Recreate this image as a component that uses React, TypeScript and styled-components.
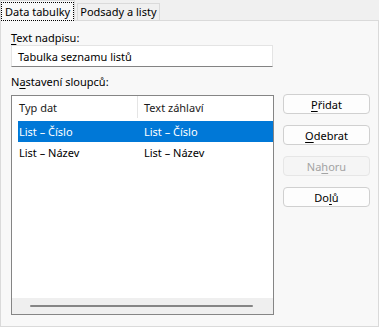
import * as React from 'react';
import styled, { createGlobalStyle } from 'styled-components';

const GlobalStyle = createGlobalStyle`
  html, body {
    margin: 0;
    padding: 0;
    background: #f0f0f0;
  }
  body {
    font-family: 'Noto Sans', 'Open Sans', sans-serif;
    font-size: 11px;
    color: #000;
  }
`;

const Dialog = styled.div`
  width: 379px;
  height: 327px;
  display: flex;
  flex-direction: column;
  background: #f0f0f0;
  box-sizing: border-box;
`;

const TabStrip = styled.div`
  height: 21px;
  display: flex;
  align-items: flex-end;
  margin-bottom: -1px;
  position: relative;
  z-index: 1;
`;

const Tab = styled.div<{ $active?: boolean }>`
  box-sizing: border-box;
  height: ${(p) => (p.$active ? '21px' : '18px')};
  padding: ${(p) => (p.$active ? '2px 1px 0 1px' : '0 2px 0 2px')};
  margin-left: ${(p) => (p.$active ? '0' : '2px')};
  background: ${(p) => (p.$active ? '#f8f8f8' : '#f0f0f0')};
  border: 1px solid #dadada;
  border-bottom: ${(p) => (p.$active ? '1px solid #f8f8f8' : '1px solid #dadada')};
  display: flex;
  align-items: ${(p) => (p.$active ? 'flex-start' : 'center')};
  line-height: 16px;
  white-space: nowrap;
  color: #000;
`;

const FocusRect = styled.span`
  outline: 1px dotted #000;
  padding: 0 3px;
  height: 17px;
  display: flex;
  align-items: center;
`;

const Panel = styled.div`
  flex: 1;
  box-sizing: border-box;
  background: #f8f8f8;
  border: 1px solid #dadada;
  padding: 9px 8px 11px 10px;
  display: grid;
  grid-template-columns: 263px 1fr;
  column-gap: 9px;
`;

const LeftColumn = styled.div`
  display: flex;
  flex-direction: column;
  min-height: 0;
`;

const Label = styled.div<{ $gap?: number }>`
  line-height: 15px;
  height: 15px;
  margin-top: ${(p) => p.$gap ?? 0}px;
  white-space: nowrap;
`;

const Key = styled.span`
  text-decoration: underline;
  text-underline-offset: 2px;
`;

const TextInput = styled.div`
  box-sizing: border-box;
  width: 262px;
  height: 22px;
  background: #fff;
  border: 1px solid #e4e4e4;
  border-bottom: 1px solid #838383;
  padding-left: 6px;
  display: flex;
  align-items: center;
`;

const ListBox = styled.div`
  flex: 1;
  margin-top: 6px;
  box-sizing: border-box;
  border: 1px solid #858585;
  background: #fff;
  display: flex;
  flex-direction: column;
  width: 263px;
`;

const Header = styled.div`
  display: grid;
  grid-template-columns: 125px 1fr;
  height: 22px;
  margin-bottom: 3px;
`;

const HeaderCell = styled.div<{ $divider?: boolean }>`
  display: flex;
  align-items: center;
  padding-left: ${(p) => (p.$divider ? '6px' : '7px')};
  border-left: ${(p) => (p.$divider ? '1px solid #e5e5e5' : 'none')};
  color: #1a1a1a;
`;

const Rows = styled.div`
  flex: 1;
  padding-left: 6px;
`;

const Row = styled.div<{ $selected?: boolean }>`
  display: grid;
  grid-template-columns: 125px 1fr;
  height: 21px;
  align-items: center;
  background: ${(p) => (p.$selected ? '#0078d7' : 'transparent')};
  color: ${(p) => (p.$selected ? '#fff' : '#000')};
`;

const Cell = styled.div`
  padding-left: 1px;
  white-space: nowrap;
`;

const HScroll = styled.div`
  height: 16px;
  background: #efefef;
  display: flex;
  align-items: center;
  padding: 0 20px 0 18px;
`;

const Thumb = styled.div`
  flex: 1;
  height: 2px;
  border-radius: 1px;
  background: #858585;
`;

const Buttons = styled.div`
  display: flex;
  flex-direction: column;
  gap: 11px;
  padding-top: 64px;
`;

const Button = styled.div<{ $disabled?: boolean }>`
  box-sizing: border-box;
  width: 87px;
  height: 20px;
  border-radius: 4px;
  border: 1px solid ${(p) => (p.$disabled ? '#e6e6e6' : '#d0d0d0')};
  background: ${(p) => (p.$disabled ? '#f5f5f5' : '#fdfdfd')};
  color: ${(p) => (p.$disabled ? '#a3a3a3' : '#000')};
  display: flex;
  align-items: center;
  justify-content: center;
`;

export default function App() {
  return (
    <Dialog>
      <GlobalStyle />
      <TabStrip>
        <Tab $active>
          <FocusRect>Data tabulky</FocusRect>
        </Tab>
        <Tab>Podsady a listy</Tab>
      </TabStrip>
      <Panel>
        <LeftColumn>
          <Label>
            <Key>T</Key>ext nadpisu:
          </Label>
          <TextInput>Tabulka seznamu listů</TextInput>
          <Label $gap={7}>
            N<Key>a</Key>stavení sloupců:
          </Label>
          <ListBox>
            <Header>
              <HeaderCell>Typ dat</HeaderCell>
              <HeaderCell $divider>Text záhlaví</HeaderCell>
            </Header>
            <Rows>
              <Row $selected>
                <Cell>List – Číslo</Cell>
                <Cell>List – Číslo</Cell>
              </Row>
              <Row>
                <Cell>List – Název</Cell>
                <Cell>List – Název</Cell>
              </Row>
            </Rows>
            <HScroll>
              <Thumb />
            </HScroll>
          </ListBox>
        </LeftColumn>
        <Buttons>
          <Button>
            <span>
              <Key>P</Key>řidat
            </span>
          </Button>
          <Button>
            <span>
              <Key>O</Key>debrat
            </span>
          </Button>
          <Button $disabled>
            <span>
              Na<Key>h</Key>oru
            </span>
          </Button>
          <Button>
            <span>
              Do<Key>l</Key>ů
            </span>
          </Button>
        </Buttons>
      </Panel>
    </Dialog>
  );
}
